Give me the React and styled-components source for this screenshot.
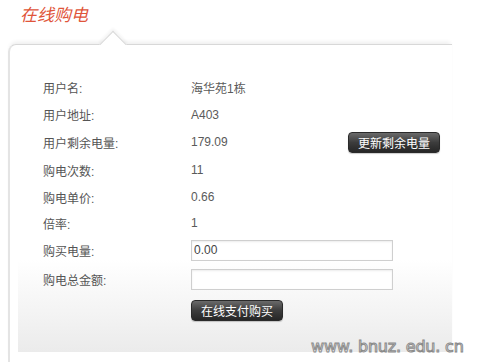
import React from 'react';
import styled, { createGlobalStyle } from 'styled-components';

const Global = createGlobalStyle`
  html, body { margin: 0; padding: 0; background: #fff; }
  body {
    font-family: "Liberation Sans", "Noto Sans CJK SC", sans-serif;
    font-size: 12px;
    color: #555;
    overflow: hidden;
  }
`;

const rows = [
  { label: '用户名:', value: '海华苑1栋', h: 27 },
  { label: '用户地址:', value: 'A403', h: 27 },
  { label: '用户剩余电量:', value: '179.09', h: 28, action: '更新剩余电量' },
  { label: '购电次数:', value: '11', h: 28 },
  { label: '购电单价:', value: '0.66', h: 26 },
  { label: '倍率:', value: '1', h: 26 },
];

const App = () => {
  return (
    <Page>
      <Global />
      <Header>
        <Title>在线购电</Title>
      </Header>
      <Card>
        <Panel>
          {rows.map((r) => (
            <Row key={r.label} h={r.h}>
              <Label>{r.label}</Label>
              <Value>{r.value}</Value>
              {r.action && <DarkButton>{r.action}</DarkButton>}
            </Row>
          ))}
          <Row h={28}>
            <Label>购买电量:</Label>
            <Field defaultValue="0.00" />
          </Row>
          <Row h={31}>
            <Label>购电总金额:</Label>
            <Field defaultValue="" />
          </Row>
          <Row h={31}>
            <Label />
            <DarkButton>在线支付购买</DarkButton>
          </Row>
        </Panel>
      </Card>
      <Watermark>www. bnuz. edu. cn</Watermark>
    </Page>
  );
};

export default App;

const Page = styled.div`
  position: relative;
  width: 487px;
  height: 362px;
  overflow: hidden;
`;

const Header = styled.div`
  height: 44px;
  padding-left: 20px;
  box-sizing: border-box;
  padding-top: 3px;
`;

const Title = styled.div`
  font-family: "Noto Sans CJK SC", sans-serif;
  font-style: italic;
  font-size: 17px;
  line-height: 22px;
  color: #e0553a;
`;

const Card = styled.div`
  position: relative;
  margin-left: 8px;
  width: 444px;
  box-sizing: border-box;
  border-top: 1px solid #d8d8d8;
  border-left: 2px solid #e4e4e4;
  border-top-left-radius: 8px;
  box-shadow: 0 -4px 4px -2px rgba(0, 0, 0, 0.07);
  padding: 0 0 10px 8px;

  &::before {
    content: '';
    position: absolute;
    left: 93px;
    top: -10px;
    width: 19px;
    height: 19px;
    background: #fff;
    border-top: 1px solid #d8d8d8;
    border-left: 1px solid #d8d8d8;
    box-shadow: -2px -2px 3px rgba(0, 0, 0, 0.05);
    transform: rotate(45deg);
  }
`;

const Panel = styled.div`
  position: relative;
  height: 307px;
  box-sizing: border-box;
  padding: 29px 0 0 25px;
  background: linear-gradient(180deg, #fff 0%, #fff 70%, #ebebeb 100%);
`;

const Row = styled.div`
  display: flex;
  align-items: center;
  height: ${(p) => p.h}px;
`;

const Label = styled.div`
  width: 148px;
  flex: none;
  color: #555;
`;

const Value = styled.div`
  width: 157px;
  flex: none;
  color: #5a5a5a;
`;

const DarkButton = styled.button`
  height: 21px;
  width: 92px;
  padding: 0;
  border: 1px solid #2a2a2a;
  border-radius: 4px;
  background: linear-gradient(180deg, #6a6a6a 0%, #3c3c3c 50%, #262626 100%);
  color: #fff;
  font-family: "Noto Sans CJK SC", sans-serif;
  font-size: 12px;
  line-height: 19px;
  box-shadow: 0 1px 1px rgba(0, 0, 0, 0.2);
`;

const Field = styled.input`
  width: 202px;
  height: 21px;
  box-sizing: border-box;
  border: 1px solid #cfcfcf;
  box-shadow: inset 0 1px 2px rgba(0, 0, 0, 0.08);
  padding: 0 2px;
  font-family: "Liberation Sans", sans-serif;
  font-size: 12px;
  color: #444;
  background: #fff;
  outline: none;
`;

const Watermark = styled.div`
  position: absolute;
  left: 311px;
  top: 337px;
  font-family: "DejaVu Sans", sans-serif;
  font-size: 16px;
  letter-spacing: -0.2px;
  color: #fff;
  -webkit-text-stroke: 1px #8a8a8a;
  white-space: nowrap;
`;
